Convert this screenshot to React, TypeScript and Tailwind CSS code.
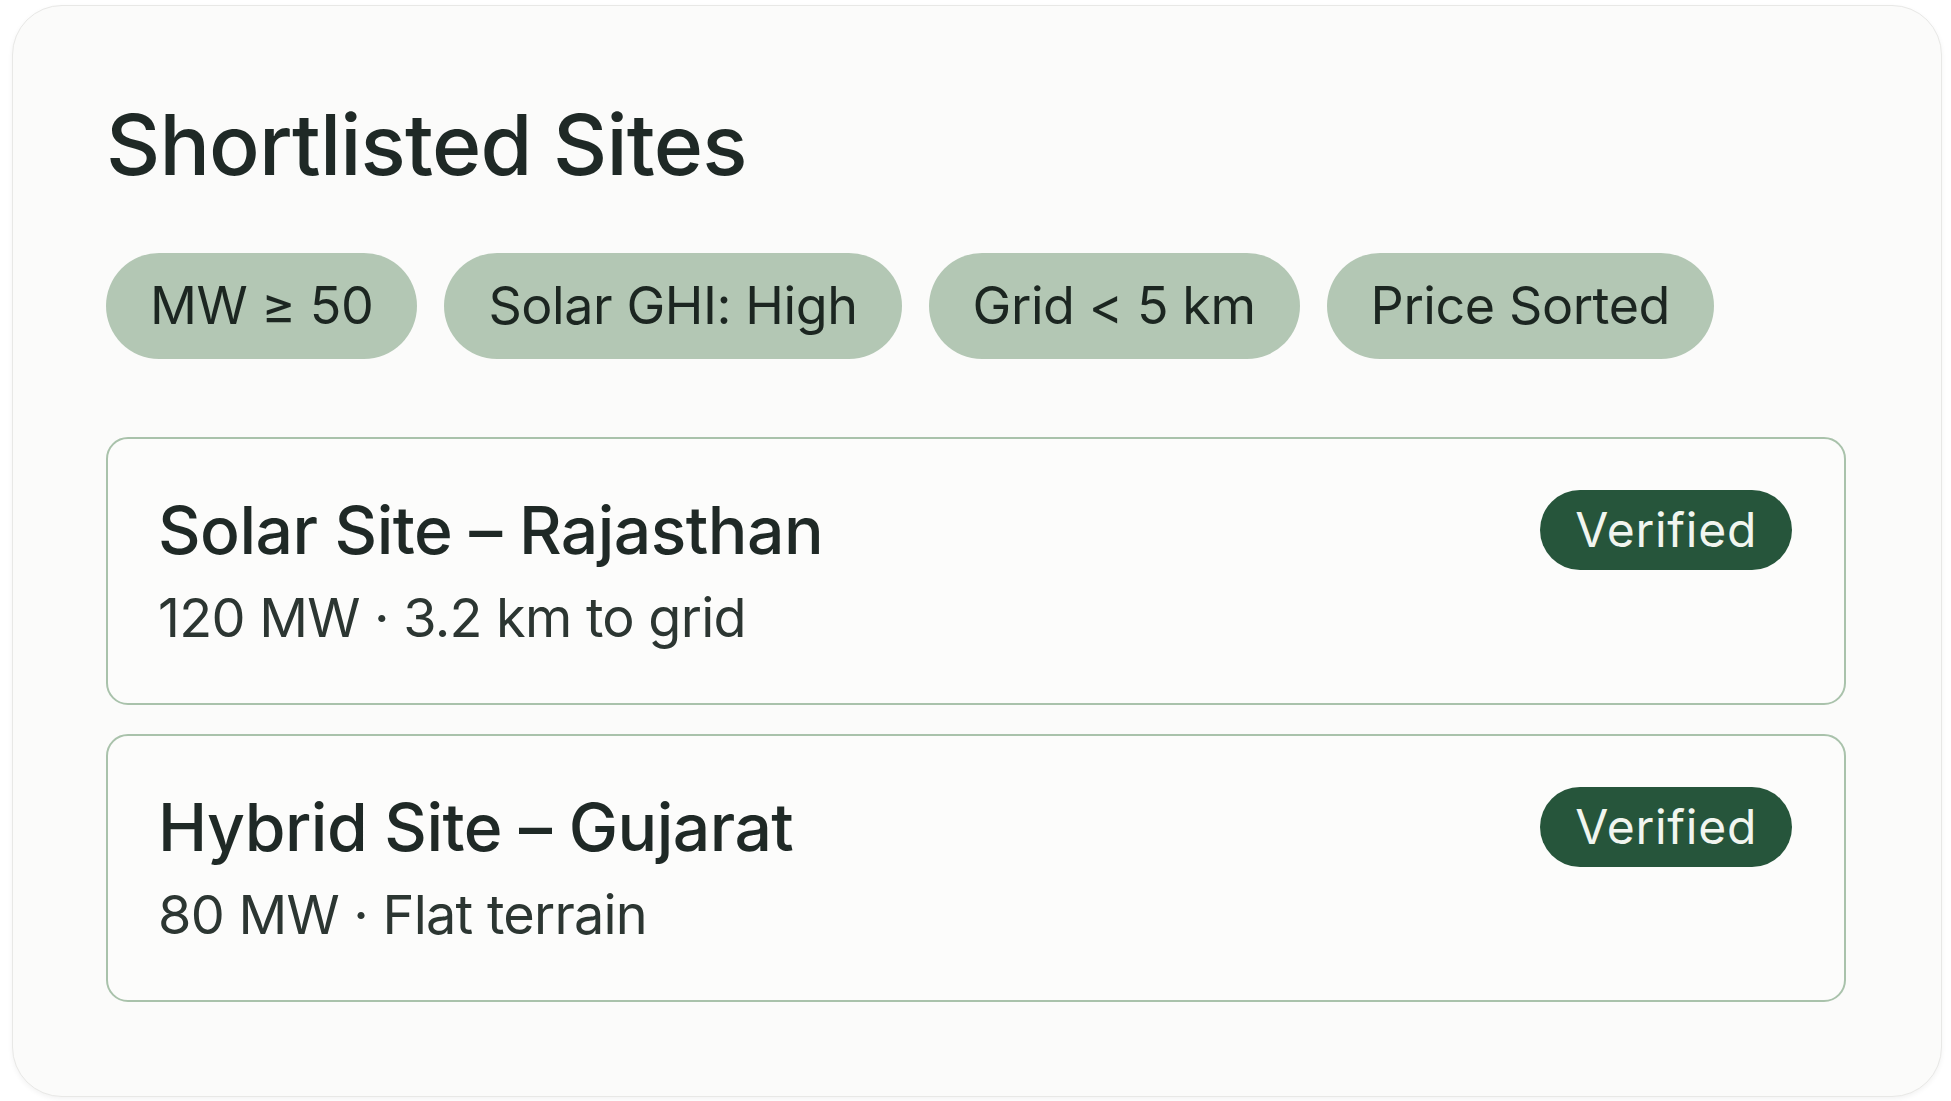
import React from "react";

const chips = ["MW ≥ 50", "Solar GHI: High", "Grid < 5 km", "Price Sorted"];

const sites = [
  { title: "Solar Site – Rajasthan", sub: "120 MW · 3.2 km to grid" },
  { title: "Hybrid Site – Gujarat", sub: "80 MW · Flat terrain" },
];

export default function App() {
  return (
    <div
      className="w-[1951px] h-[1101px] bg-white pl-[12px] pt-[5px]"
      style={{ fontFamily: "Inter, 'Noto Sans', sans-serif" }}
    >
      <div className="w-[1930px] h-[1092px] rounded-[50px] bg-[#fbfbfa] border border-[#e8e8e6] shadow-[0_2px_5px_rgba(0,0,0,0.05)] pl-[93px] pr-[95px] pt-[97px]">
        <h1 className="text-[84px] leading-none font-medium text-[#1f2926] tracking-[-0.01em]">
          Shortlisted Sites
        </h1>
        <div className="flex gap-[27px] mt-[66px]">
          {chips.map((c) => (
            <div
              key={c}
              className="h-[106px] px-[44px] rounded-full bg-[#b3c7b4] flex items-center text-[52px] leading-none text-[#1c2621] tracking-[-0.008em]"
            >
              {c}
            </div>
          ))}
        </div>
        <div className="flex flex-col gap-[29px] mt-[78px]">
          {sites.map((s) => (
            <div
              key={s.title}
              className="h-[268px] border-2 border-[#a9c2ab] rounded-[22px] bg-[#fcfcfb] pl-[50px] pr-[52px] pt-[58px] flex justify-between items-start"
            >
              <div>
                <div className="text-[66px] leading-none font-medium text-[#1f2926] tracking-[-0.008em]">
                  {s.title}
                </div>
                <div className="text-[54px] leading-none mt-[28px] text-[#2c3632] tracking-[-0.014em]">
                  {s.sub}
                </div>
              </div>
              <div className="h-[80px] px-[35px] rounded-full bg-[#26553b] flex items-center text-[48px] leading-none text-[#f1f5ef] tracking-[0.015em] -mt-[7px]">
                Verified
              </div>
            </div>
          ))}
        </div>
      </div>
    </div>
  );
}
